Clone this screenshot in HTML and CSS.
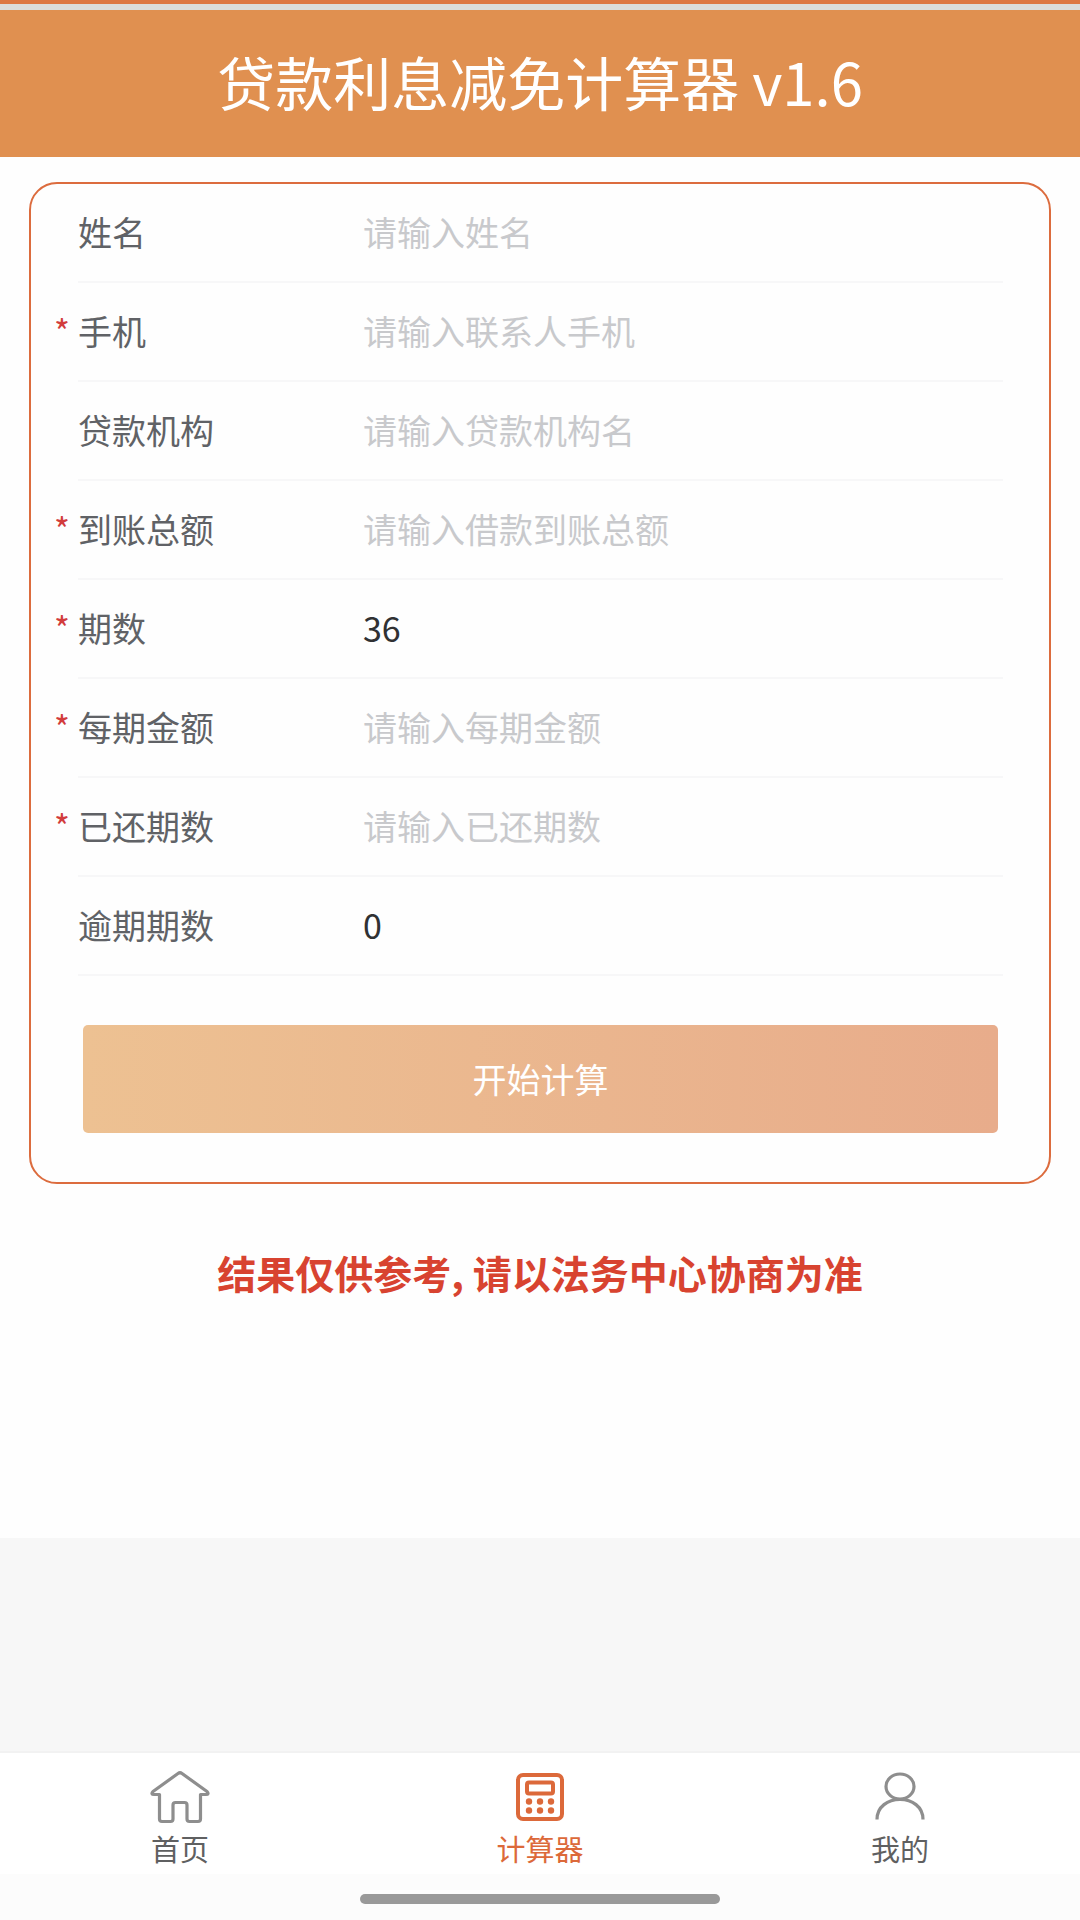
FILE: index.html
```html
<!DOCTYPE html>
<html lang="zh-CN">
<head>
    <meta charset="UTF-8">
    <meta name="viewport" content="width=device-width, initial-scale=1.0">
    <title>贷款利息减免计算器</title>
    <link rel="stylesheet" href="styles.css">
</head>
<body>
    <header>
        <h1>贷款利息减免计算器 v1.6</h1>
    </header>

    <main>
        <form class="card">
            <div class="field">
                <label for="name">姓名</label>
                <input type="text" id="name" placeholder="请输入姓名">
            </div>
            <div class="field required">
                <label for="phone">手机</label>
                <input type="tel" id="phone" placeholder="请输入联系人手机">
            </div>
            <div class="field">
                <label for="org">贷款机构</label>
                <input type="text" id="org" placeholder="请输入贷款机构名">
            </div>
            <div class="field required">
                <label for="total">到账总额</label>
                <input type="text" id="total" placeholder="请输入借款到账总额">
            </div>
            <div class="field required">
                <label for="periods">期数</label>
                <input type="text" id="periods" value="36">
            </div>
            <div class="field required">
                <label for="amount">每期金额</label>
                <input type="text" id="amount" placeholder="请输入每期金额">
            </div>
            <div class="field required">
                <label for="paid">已还期数</label>
                <input type="text" id="paid" placeholder="请输入已还期数">
            </div>
            <div class="field">
                <label for="overdue">逾期期数</label>
                <input type="text" id="overdue" value="0">
            </div>
            <button type="button" class="submit">开始计算</button>
        </form>

        <p class="note">结果仅供参考, 请以法务中心协商为准</p>
    </main>

    <nav class="tabbar">
        <a href="#home">
            <svg width="60" height="56" viewBox="0 0 60 56" fill="none" stroke="currentColor" stroke-width="3.2" stroke-linejoin="round">
                <path d="M28 4.500Q30 3 32 4.500L57 22.500Q59.500 25.500 56 25.500H50.500V50Q50.500 52.500 48 52.500H39.500Q37 52.500 37 50V36Q37 33.500 34.500 33.500H25.500Q23 33.500 23 36V50Q23 52.500 20.500 52.500H12Q9.500 52.500 9.500 50V25.500H4Q.5 25.500 3 22.500Z"/>
            </svg>
            <span>首页</span>
        </a>
        <a href="#calculator" class="active">
            <svg width="60" height="56" viewBox="0 0 60 56" fill="none" stroke="currentColor" stroke-width="4">
                <rect x="8" y="6" width="44" height="44" rx="5"/>
                <rect x="17" y="13.500" width="26" height="11" rx="2"/>
                <g fill="currentColor" stroke="none">
                    <circle cx="19" cy="32.500" r="3.200"/>
                    <circle cx="30" cy="32.500" r="3.200"/>
                    <circle cx="41" cy="32.500" r="3.200"/>
                    <circle cx="19" cy="41.500" r="3.200"/>
                    <circle cx="30" cy="41.500" r="3.200"/>
                    <circle cx="41" cy="41.500" r="3.200"/>
                </g>
            </svg>
            <span>计算器</span>
        </a>
        <a href="#mine">
            <svg width="60" height="56" viewBox="0 0 60 56" fill="none" stroke="currentColor" stroke-width="3.2">
                <ellipse cx="30" cy="17.500" rx="14" ry="12.500"/>
                <path d="M7 50.500C7 37.500 18 30.500 30 30.500S53 37.500 53 50.500"/>
            </svg>
            <span>我的</span>
        </a>
    </nav>
    <div class="home-bar"></div>
</body>
</html>
```
FILE: styles.css
```css
* {
    margin: 0;
    padding: 0;
    box-sizing: border-box;
}

body {
    font-family: 'Noto Sans CJK SC', sans-serif;
    background: #f7f7f7;
    color: #606266;
    min-height: 100vh;
    display: flex;
    flex-direction: column;
}

header {
    background: #e09050;
    border-top: 4px solid #dd7744;
    color: white;
    text-align: center;
}

header h1 {
    border-top: 6px solid #dcdcdc;
    padding: 29px 20px 34px;
    font-size: 58px;
    font-weight: 400;
    line-height: 84px;
}

main {
    background: #fefefe;
    padding: 25px 29px 234px;
}

/* Form */
.card {
    border: 2px solid #dc6c3e;
    border-radius: 28px;
    padding: 0 46px 49px 47px;
}

.field {
    position: relative;
    display: flex;
    align-items: center;
    height: 99px;
    padding-bottom: 2px;
    border-bottom: 2px solid #f7f7f8;
    font-size: 34px;
    line-height: 50px;
}

.field label {
    flex: 0 0 285px;
}

.field.required::before {
    content: "*";
    position: absolute;
    left: -24px;
    color: #d23c3c;
    font-size: 34px;
}

.field input {
    flex: 1;
    min-width: 0;
    border: none;
    outline: none;
    background: none;
    font: inherit;
    color: #303133;
}

.field input::placeholder {
    color: #c8c9cc;
    opacity: 1;
}

.submit {
    display: block;
    width: calc(100% - 10px);
    height: 108px;
    margin: 49px auto 0;
    padding-bottom: 2px;
    border: none;
    border-radius: 5px;
    background: linear-gradient(90deg, #edc192, #e8ac8b);
    color: white;
    font: inherit;
    font-size: 34px;
}

.note {
    margin-top: 58px;
    padding-bottom: 2px;
    text-align: center;
    color: #d84330;
    font-size: 39px;
    font-weight: 700;
    line-height: 60px;
}

/* Bottom navigation */
.tabbar {
    display: flex;
    margin-top: auto;
    border-top: 2px solid #f2f2f2;
    background: white;
}

.tabbar a {
    flex: 1;
    display: flex;
    flex-direction: column;
    align-items: center;
    padding: 16px 0 4px;
    color: #5f6061;
    font-size: 29px;
    line-height: 44px;
    text-decoration: none;
}

.tabbar svg {
    margin-bottom: 1px;
    color: #8e8e8e;
}

.tabbar .active,
.tabbar .active svg {
    color: #dc693a;
}

.home-bar {
    padding: 20px 0 16px;
    background: #fcfcfc;
}

.home-bar::before {
    content: "";
    display: block;
    width: 33.333%;
    height: 10px;
    margin: 0 auto;
    border-radius: 5px;
    background: #999;
}
```
